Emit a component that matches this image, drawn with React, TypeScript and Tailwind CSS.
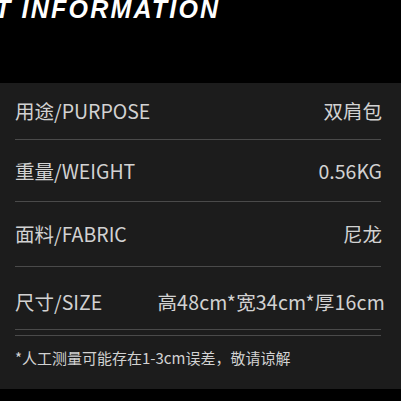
export default function App() {
  const rows = [
    { l: "用途/PURPOSE", r: "双肩包", h: "h-[57px]" },
    { l: "重量/WEIGHT", r: "0.56KG", h: "h-[62px]" },
    { l: "面料/FABRIC", r: "尼龙", h: "h-[65px]" },
  ];
  return (
    <div className="w-[401px] h-[401px] bg-black overflow-hidden flex flex-col">
      <div className="h-[83px] shrink-0 overflow-hidden">
        <div
          className="ml-[-5px] mt-[-6px] text-white text-[25px] font-bold italic tracking-[2.2px] leading-[30px] whitespace-nowrap"
          style={{ fontFamily: '"Liberation Sans", Arial, sans-serif' }}
        >
          T INFORMATION
        </div>
      </div>
      <div
        className="bg-[#1c1c1c] h-[306px] shrink-0 pl-[15px] pr-[20px] text-[#d2d2d2]"
        style={{ fontFamily: '"Noto Sans CJK SC", "Noto Sans", sans-serif' }}
      >
        {rows.map((row) => (
          <div key={row.l} className={`${row.h} flex items-center justify-between border-b border-[#4a4a4a] text-[19.5px]`}>
            <span>{row.l}</span>
            <span className="mr-[-1px]">{row.r}</span>
          </div>
        ))}
        <div className="h-[63px] flex items-center justify-between border-b border-[#4a4a4a] text-[19.5px] pt-[8px]">
          <span>尺寸/SIZE</span>
          <span className="mr-[-4px] whitespace-nowrap tracking-[0.2px]">高48cm*宽34cm*厚16cm</span>
        </div>
        <div className="mt-[5px] border-t border-[#4a4a4a]"></div>
        <div className="pt-[12px] text-[15px] leading-[20px]">*人工测量可能存在1-3cm误差，敬请谅解</div>
      </div>
    </div>
  );
}
